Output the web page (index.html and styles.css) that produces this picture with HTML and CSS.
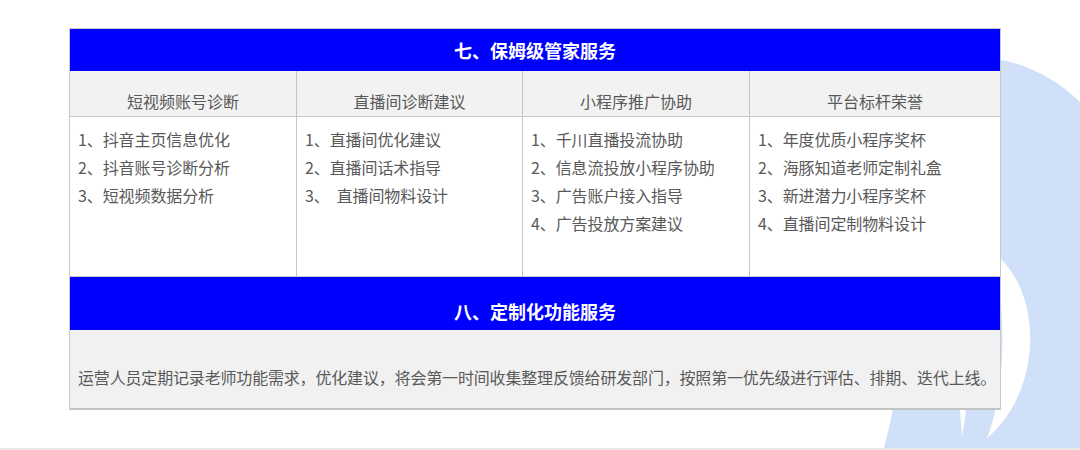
FILE: index.html
```html
<!DOCTYPE html>
<html lang="zh-CN">
<head>
<meta charset="utf-8">
<title>服务</title>
<link rel="stylesheet" href="styles.css">
</head>
<body>
<div class="page">
  <svg class="deco" viewBox="860 40 220 410" width="220" height="410" aria-hidden="true">
    <path d="M900 70 C975 42 1045 58 1095 118 L1095 455 L882 455 C892 420 900 380 902 330 Z" fill="#d0e0f9"/>
    <path d="M993 252 C1045 292 1042 392 987 438 C1003 400 1009 322 993 252 Z" fill="#ffffff"/>
    <path d="M935 300 C966 340 972 392 962 436 C960 398 954 352 935 300 Z" fill="#ffffff"/>
  </svg>
  <div class="sheet">
    <div class="title title-top">七、保姆级管家服务</div>
    <div class="grid">
      <div class="head">短视频账号诊断</div>
      <div class="head">直播间诊断建议</div>
      <div class="head">小程序推广协助</div>
      <div class="head last">平台标杆荣誉</div>
      <div class="cell">
        <p>1、抖音主页信息优化</p>
        <p>2、抖音账号诊断分析</p>
        <p>3、短视频数据分析</p>
      </div>
      <div class="cell">
        <p>1、直播间优化建议</p>
        <p>2、直播间话术指导</p>
        <p>3、&nbsp; 直播间物料设计</p>
      </div>
      <div class="cell">
        <p>1、千川直播投流协助</p>
        <p>2、信息流投放小程序协助</p>
        <p>3、广告账户接入指导</p>
        <p>4、广告投放方案建议</p>
      </div>
      <div class="cell last">
        <p>1、年度优质小程序奖杯</p>
        <p>2、海豚知道老师定制礼盒</p>
        <p>3、新进潜力小程序奖杯</p>
        <p>4、直播间定制物料设计</p>
      </div>
    </div>
    <div class="title title-second">八、定制化功能服务</div>
    <div class="note">运营人员定期记录老师功能需求，优化建议，将会第一时间收集整理反馈给研发部门，按照第一优先级进行评估、排期、迭代上线。</div>
  </div>
</div>
</body>
</html>
```

FILE: styles.css
```css
html, body {
  margin: 0;
  padding: 0;
  background: #ffffff;
}

body {
  font-family: "Noto Sans CJK SC", "Noto Sans", "Liberation Sans", sans-serif;
  color: #595959;
}

.page {
  position: relative;
  width: 1080px;
  height: 420px;
  padding-top: 28px;
  border-bottom: 2px solid #e8e8e8;
  overflow: hidden;
  box-sizing: content-box;
}

.deco {
  position: absolute;
  left: 860px;
  top: 40px;
  z-index: 0;
}

.sheet {
  position: relative;
  z-index: 1;
  margin-left: 69px;
  width: 930px;
  border: 1px solid #c8c8c8;
  border-bottom: 2px solid #c4c4c4;
  background: #ffffff;
}

.title {
  background: #0000ff;
  color: #ffffff;
  font-weight: bold;
  font-size: 18px;
  line-height: 28px;
  text-align: center;
}

.title-top {
  height: 42px;
  line-height: 42px;
}

.title-second {
  padding-top: 20px;
  padding-bottom: 5px;
  border-top: 1px solid #c8c8c8;
}

.grid {
  display: grid;
  grid-template-columns: 227px 226px 227px 1fr;
}

.head {
  background: #f2f2f2;
  font-size: 16px;
  line-height: 28px;
  text-align: center;
  padding-top: 16px;
  padding-bottom: 1px;
  border-right: 1px solid #c4c4c4;
  border-bottom: 1px solid #c8c8c8;
}

.cell {
  height: 151px;
  padding: 8px 0 0 8px;
  border-right: 1px solid #c4c4c4;
  font-size: 16px;
  line-height: 28px;
  letter-spacing: -0.1px;
}

.cell p {
  margin: 0;
}

.head.last,
.cell.last {
  border-right: none;
}

.note {
  background: #f1f1f1;
  font-size: 16px;
  line-height: 28px;
  letter-spacing: -0.17px;
  padding: 33px 0 17px 8px;
  white-space: nowrap;
}
```
